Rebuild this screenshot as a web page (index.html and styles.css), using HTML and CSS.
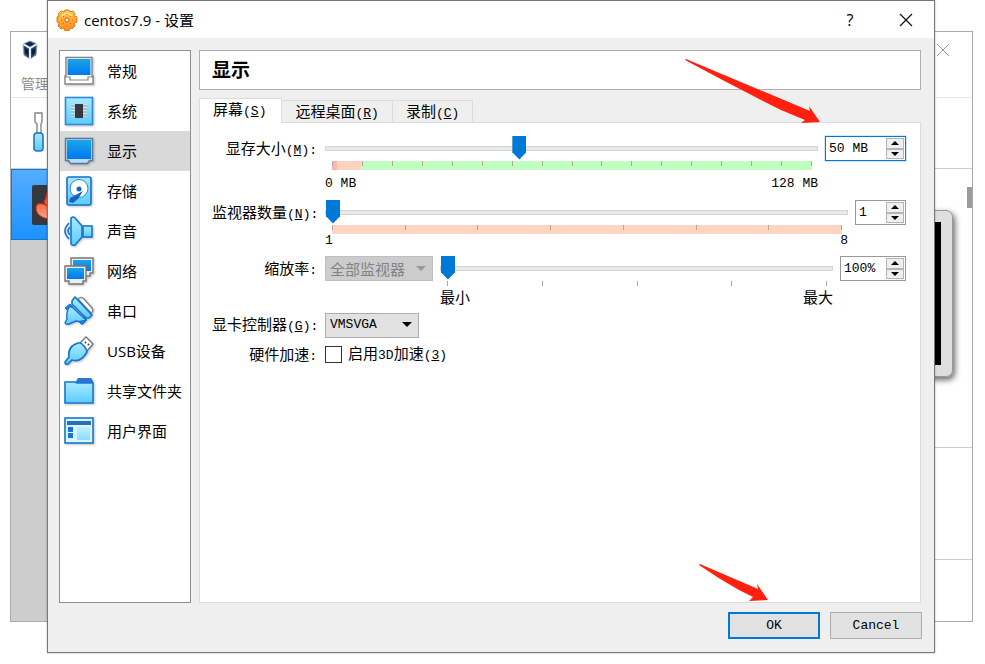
FILE: index.html
```
<!DOCTYPE html>
<html lang="zh-CN">
<head>
  <meta charset="utf-8">
  <title>centos7.9 - 设置</title>
  <link rel="stylesheet" href="styles.css">
</head>
<body>
  <!-- shared gradients -->
  <svg class="defs" width="0" height="0" aria-hidden="true">
    <defs>
      <linearGradient id="screen" x1="0" y1="0" x2="0" y2="1"><stop offset="0" stop-color="#1ba5e8"/><stop offset="1" stop-color="#0078f0"/></linearGradient>
      <linearGradient id="light" x1="0" y1="0" x2="0" y2="1"><stop offset="0" stop-color="#a8ebff"/><stop offset="1" stop-color="#5ccbff"/></linearGradient>
      <linearGradient id="orange" x1="0" y1="0" x2="0" y2="1"><stop offset="0" stop-color="#ffc64a"/><stop offset="1" stop-color="#ff8b1e"/></linearGradient>
      <linearGradient id="red" x1="0" y1="0" x2="0" y2="1"><stop offset="0" stop-color="#e8300c"/><stop offset="1" stop-color="#ffa88c"/></linearGradient>
    </defs>
  </svg>

  <!-- Manager window behind the dialog -->
  <div class="manager">
    <div class="manager-title">
      <svg width="18" height="20" viewBox="0 0 18 20">
        <path d="M9 1l7 3-1 11-6 4-6-4L2 4z" fill="#26466f" stroke="#8a9bb0"/>
        <path d="M2 4l7 4 7-4M9 8v11" fill="none" stroke="#e5edf6" stroke-width="2"/>
        <path d="M5 4l4-2 4 2-4 2z" fill="#102545"/>
        <path d="M4 8l3 2v5l-3-2zM14 8l-3 2v5l3-2z" fill="#0c1d3c"/>
      </svg>
      <button class="close-btn" aria-label="关闭管理器">
        <svg width="14" height="14" viewBox="0 0 14 14"><path d="M1 1l12 12M13 1L1 13" stroke="#999" fill="none"/></svg>
      </button>
    </div>
    <div class="manager-menu">管理</div>
    <div class="manager-toolbar">
      <svg width="12" height="40" viewBox="0 0 12 40">
        <path d="M2 1h7v9l-1 2v9H4v-9l-2-2z" fill="#fff" stroke="#858585" stroke-width="1.4"/>
        <rect x="1" y="21" width="9" height="18" rx="3" fill="url(#light)" stroke="#1c74cc" stroke-width="1.6"/>
      </svg>
    </div>
    <div class="manager-main">
      <div class="machines">
        <div class="machine">
          <svg width="40" height="40" viewBox="0 0 40 40">
            <rect width="40" height="40" rx="2" fill="#363840"/>
            <path d="M18 5c-5 2-3 8-6 11 0 3 2 3 3 5-4-3-11-4-11 2 0 8 9 12 20 11V5z" fill="url(#red)" stroke="#c72c10"/>
          </svg>
        </div>
      </div>
      <div class="details">
        <div class="preview"><div class="monitor"></div></div>
        <div class="detail-row"></div>
        <div class="detail-row last"></div>
        <div class="scroll-thumb"></div>
      </div>
    </div>
  </div>

  <!-- Settings dialog -->
  <div class="dialog" role="dialog" aria-labelledby="dialog-title">
    <header class="titlebar">
      <svg width="22" height="22" viewBox="0 0 22 22">
        <path d="M9 1h4l1 2 3-1 2 3-1 2 3 1v5l-3 1 1 3-3 3-2-1-1 3H9l-1-3-3 1-3-3 1-3-2-1V8l2-1-1-2 3-3 3 1z" fill="url(#orange)" stroke="#e07a18" stroke-linejoin="round"/>
        <path d="M6 7q5-5 10 0" fill="none" stroke="#ffe08b" stroke-width="2"/>
        <circle cx="11" cy="11" r="2" fill="#fff" stroke="#c75c08"/>
        <path d="M11 5v1M11 16v1M5 11h1M16 11h1M7 7l1 1M15 7l-1 1M7 15l1-1M15 15l-1-1" stroke="#d96c0a"/>
      </svg>
      <span id="dialog-title" class="title-text">centos7.9 - 设置</span>
      <button class="help-btn" aria-label="帮助">?</button>
      <button class="close-btn" aria-label="关闭">
        <svg width="14" height="14" viewBox="0 0 14 14"><path d="M1 1l12 12M13 1L1 13" stroke="#111" stroke-width="1.2" fill="none"/></svg>
      </button>
    </header>

    <div class="dialog-body">
      <nav class="categories">
        <button class="category">
          <svg class="icon" viewBox="0 0 30 30">
            <path d="M2 1.500h26v18.500h1v8H1v-8h1z" fill="#fff" stroke="#858585" stroke-width="1.4"/>
            <rect x="3.500" y="3" width="23" height="16" fill="url(#screen)"/>
            <path d="M1 21h5v3h18v-3h5" fill="none" stroke="#858585" stroke-width="1.2"/>
          </svg>常规
        </button>
        <button class="category">
          <svg class="icon" viewBox="0 0 30 30">
            <rect x="1.500" y="1.500" width="27" height="27" fill="url(#light)" stroke="#2f8ada" stroke-width="1.6"/>
            <path d="M7 10h16M7 13h16M7 16h16M7 19h16" stroke="#fff" stroke-width="2.6"/>
            <path d="M7 10h16M7 13h16M7 16h16M7 19h16" stroke="#637786"/>
            <rect x="11" y="8" width="8" height="14" fill="#343941"/>
          </svg>系统
        </button>
        <button class="category active">
          <svg class="icon" viewBox="0 0 30 30">
            <path d="M1.500 2.500h27v22h-3l-2 3h-17l-2-3h-3z" fill="#b9dcf8" stroke="#56799c" stroke-width="1.4"/>
            <rect x="3" y="4" width="24" height="19" fill="url(#screen)"/>
          </svg>显示
        </button>
        <button class="category">
          <svg class="icon" viewBox="0 0 30 30">
            <rect x="3" y="1" width="24" height="28" rx="2" fill="url(#light)" stroke="#1772cc" stroke-width="1.6"/>
            <circle cx="15" cy="12.500" r="9" fill="#fff" stroke="#238ad9"/>
            <circle cx="15" cy="13" r="2.500" fill="#1763bd"/>
            <path d="M19 15l-5 8-5 4-4-1 1-4z" fill="#1763bd"/>
          </svg>存储
        </button>
        <button class="category">
          <svg class="icon" viewBox="0 0 30 30">
            <path d="M7 2q2-2 4 0l7 8v11l-7 8q-2 1-4-1z" fill="url(#light)" stroke="#1776d0" stroke-width="1.6"/>
            <rect x="19" y="10" width="9" height="11" fill="url(#light)" stroke="#1776d0" stroke-width="1.6"/>
            <path d="M5 7q-8 8 0 16M6 11q-4 4 0 8" fill="none" stroke="#1776d0" stroke-width="1.6"/>
          </svg>声音
        </button>
        <button class="category">
          <svg class="icon" viewBox="0 0 30 30">
            <path d="M7 2h22v15h-3v3H7z" fill="#eee" stroke="#777" stroke-width="1.4"/>
            <rect x="9" y="4" width="18" height="11" fill="url(#screen)"/>
            <path d="M1 10h21v15h-3v3H5v-3H1z" fill="#eee" stroke="#777" stroke-width="1.4"/>
            <rect x="3" y="12" width="17" height="11" fill="url(#screen)"/>
          </svg>网络
        </button>
        <button class="category">
          <svg class="icon" viewBox="0 0 30 30">
            <path d="M14 3q3-3 6 0l8 9q2 3-1 5z" fill="#fff" stroke="#858585" stroke-width="1.4"/>
            <path d="M1 12l5-4 3 3-5 4zM15 26l5-5 3 3-4 4q-2 1-4-2z" fill="#1f86e0" stroke="#1773cc"/>
            <path d="M8 11l14 13q-5 2-10 1l-7 3q-3 1-4-1l2-4q-1-6 2-12z" fill="url(#light)" stroke="#1773cc" stroke-width="1.4" stroke-linejoin="round"/>
            <path d="M8 5l3-4 17 18-3 3h-3L8 8z" fill="url(#light)" stroke="#1773cc" stroke-width="1.6" stroke-linejoin="round"/>
          </svg>串口
        </button>
        <button class="category">
          <svg class="icon" viewBox="0 0 30 30">
            <path d="M16 7l6-6 7 7-6 7z" fill="#fff" stroke="#777" stroke-width="1.4"/>
            <path d="M21 6l1 1M24 8l1 1" stroke="#444" stroke-width="2"/>
            <path d="M14 7q3-1 6 3t3 6c-4 7-9 10-15 8l-4 4q-3 1-3-2l4-5C4 14 7 9 14 7z" fill="url(#light)" stroke="#1875c7" stroke-width="1.6"/>
          </svg>USB设备
        </button>
        <button class="category">
          <svg class="icon" viewBox="0 0 30 30">
            <path d="M11 7l3-5h13l2 3v5H11z" fill="#2b76d2"/>
            <path d="M1 6h10l2 1h16v20H1z" fill="url(#light)" stroke="#1678d0" stroke-width="1.6"/>
          </svg>共享文件夹
        </button>
        <button class="category">
          <svg class="icon" viewBox="0 0 30 30">
            <rect x="1" y="2" width="28" height="25" fill="#d9f5ff" stroke="#1678d0" stroke-width="1.6"/>
            <path d="M3 5h24v4H3z" fill="#286fc2"/>
            <path d="M4 11h5v5H4zM4 17h5v5H4z" fill="#1474dd"/>
            <rect x="13" y="11" width="13" height="13" fill="url(#light)" opacity=".6"/>
          </svg>用户界面
        </button>
      </nav>

      <main class="page">
        <h1 class="page-title">显示</h1>

        <div class="tabs" role="tablist">
          <button class="tab active" role="tab" aria-selected="true">屏幕<span class="mono">(<u>S</u>)</span></button>
          <button class="tab" role="tab">远程桌面<span class="mono">(<u>R</u>)</span></button>
          <button class="tab" role="tab">录制<span class="mono">(<u>C</u>)</span></button>
        </div>

        <form class="panel">
          <label class="label" for="memory">显存大小<span class="mono">(<u>M</u>):</span></label>
          <div class="controls memory-row">
            <div class="slider">
              <input id="memory" type="range" min="0" max="128" value="50">
              <div class="scale memory-scale"><i></i><i></i><i></i><i></i><i></i><i></i><i></i><i></i><i></i><i></i><i></i><i></i><i></i><i></i><i></i><i></i><i></i></div>
              <div class="ends mono"><span>0 MB</span><span>128 MB</span></div>
            </div>
            <div class="spin wide focused">
              <input class="mono" type="text" value="50 MB" aria-label="显存大小">
              <div class="spin-buttons"><button type="button" class="up" aria-label="增加"></button><button type="button" class="down" aria-label="减少"></button></div>
            </div>
          </div>

          <label class="label" for="monitors">监视器数量<span class="mono">(<u>N</u>):</span></label>
          <div class="controls monitors-row">
            <div class="slider">
              <input id="monitors" type="range" min="1" max="8" value="1">
              <div class="scale monitors-scale"><i></i><i></i><i></i><i></i><i></i><i></i><i></i><i></i></div>
              <div class="ends mono"><span>1</span><span>8</span></div>
            </div>
            <div class="spin narrow">
              <input class="mono" type="text" value="1" aria-label="监视器数量">
              <div class="spin-buttons"><button type="button" class="up" aria-label="增加"></button><button type="button" class="down" aria-label="减少"></button></div>
            </div>
          </div>

          <label class="label" for="zoom">缩放率<span class="mono">:</span></label>
          <div class="controls zoom-row">
            <div class="select disabled">
              <select aria-label="监视器" disabled><option>全部监视器</option></select>
            </div>
            <div class="slider">
              <input id="zoom" type="range" min="100" max="200" value="100">
              <div class="scale"><i></i><i></i><i></i><i></i><i></i></div>
              <div class="ends"><span>最小</span><span>最大</span></div>
            </div>
            <div class="spin medium">
              <input class="mono" type="text" value="100%" aria-label="缩放率">
              <div class="spin-buttons"><button type="button" class="up" aria-label="增加"></button><button type="button" class="down" aria-label="减少"></button></div>
            </div>
          </div>

          <label class="label" for="controller">显卡控制器<span class="mono">(<u>G</u>):</span></label>
          <div class="controls">
            <div class="select">
              <select id="controller" class="mono"><option>VMSVGA</option></select>
            </div>
          </div>

          <span class="label short">硬件加速<span class="mono">:</span></span>
          <label class="check">
            <input type="checkbox">
            <span>启用<span class="mono">3D</span>加速<span class="mono">(<u>3</u>)</span></span>
          </label>
        </form>
      </main>
    </div>

    <footer class="buttons">
      <button class="btn primary mono">OK</button>
      <button class="btn mono">Cancel</button>
    </footer>

    <!-- Red pointers -->
    <svg class="arrow arrow-memory" width="136" height="66" viewBox="0 0 136 66">
      <path d="M1 1L125 53 124 48 135 64 116 65 120 62 96 52Q48 28 0 2z" fill="#ff2010"/>
    </svg>
    <svg class="arrow arrow-ok" width="70" height="38" viewBox="0 0 70 38">
      <path d="M1 0L59 25 58 20 69 36 50 37 54 33 40 26Q20 15 0 1z" fill="#ff2010"/>
    </svg>
  </div>
</body>
</html>
```

FILE: styles.css
```
* {
  box-sizing: border-box;
}

body {
  margin: 0;
  height: 100vh;
  min-height: 560px;
  position: relative;
  overflow: hidden;
  background: #fff;
  color: #000;
  font-family: "Open Sans", "Noto Sans CJK SC", sans-serif;
  font-size: 15px;
  line-height: 20px;
}

button, input, select {
  font: inherit;
  color: inherit;
  margin: 0;
  padding: 0;
}

button {
  border: none;
  background: none;
}

.defs {
  position: absolute;
}

.mono {
  font-family: "Liberation Mono", monospace;
  font-size: 13px;
}

/* Manager window */
.manager {
  position: absolute;
  top: 31px;
  right: 12px;
  bottom: 42px;
  left: 10px;
  display: flex;
  flex-direction: column;
  border: 1px solid #aaa;
  background: #fff;
}

.manager-title {
  display: flex;
  justify-content: space-between;
  align-items: center;
  height: 36px;
  padding: 0 22px 0 10px;
}

.manager-menu {
  height: 30px;
  padding: 6px 10px;
  border-bottom: 1px solid #e8e8e8;
  color: #8c8c8c;
  font-size: 14px;
}

.manager-toolbar {
  height: 71px;
  padding: 14px 22px;
  border-bottom: 1px solid #ccc;
}

.manager-main {
  flex: 1;
  display: flex;
}

.machines {
  width: 35%;
  background: #cdcdcd;
}

.machine {
  height: 71px;
  padding: 15px 20px;
  border: 1px solid #1478d0;
  background: linear-gradient(#55adff, #1c93ff);
}

.details {
  flex: 1;
  position: relative;
}

.preview {
  height: 279px;
  padding: 41px 19px 0;
  border-bottom: 1px solid #ccc;
}

.monitor {
  height: 167px;
  border: 12px solid #dedede;
  outline: 1px solid #999;
  outline-offset: -1px;
  border-radius: 7px;
  background: #000;
  box-shadow: 2px 3px 6px rgba(0, 0, 0, 0.6);
}

.detail-row {
  height: 112px;
  border-bottom: 1px solid #ccc;
}

.detail-row.last {
  border: none;
  height: auto;
}

.scroll-thumb {
  position: absolute;
  top: 18px;
  right: 0;
  width: 5px;
  height: 21px;
  background: #9b9b9b;
}

/* Dialog window */
.dialog {
  position: absolute;
  top: 0;
  right: 50px;
  bottom: 11px;
  left: 47px;
  display: flex;
  flex-direction: column;
  border: 1px solid #777;
  background: #efefef;
  box-shadow: 0 0 2px rgba(0, 0, 0, 0.3);
}

.titlebar {
  display: flex;
  align-items: center;
  height: 37px;
  padding: 0 16px 0 8px;
  background: #fff;
}

.title-text {
  flex: 1;
  margin-left: 6px;
}

.help-btn {
  width: 28px;
  margin-right: 30px;
  font-size: 16px;
}

.close-btn {
  display: flex;
  justify-content: center;
  align-items: center;
  width: 24px;
  height: 24px;
}

.manager .close-btn {
  width: 14px;
}

.dialog-body {
  flex: 1;
  display: flex;
  gap: 8px;
  padding: 12px 13px 0 11px;
  min-height: 0;
}

/* Category list */
.categories {
  flex: none;
  width: 132px;
  border: 1px solid #8b9097;
  background: #fff;
}

.category {
  display: flex;
  align-items: center;
  gap: 13px;
  width: 100%;
  height: 40px;
  padding-left: 4px;
  text-align: left;
  white-space: nowrap;
}

.category.active {
  background: #d9d9d9;
}

.icon {
  flex: none;
  width: 30px;
  height: 30px;
  filter: drop-shadow(1px 1px 1px rgba(0, 0, 0, 0.25));
}

/* Settings page */
.page {
  flex: 1;
  display: flex;
  flex-direction: column;
  min-width: 0;
}

.page-title {
  height: 40px;
  margin: 0;
  padding-left: 12px;
  border: 1px solid #b0b0b0;
  background: #fff;
  font-size: 19px;
  line-height: 38px;
}

.tabs {
  display: flex;
  align-items: flex-end;
  height: 32px;
}

.tab {
  height: 22px;
  padding: 0 13px;
  border: 1px solid #dcdcdc;
  border-left: none;
  border-bottom: none;
  line-height: 20px;
}

.tab.active {
  height: 25px;
  margin-bottom: -1px;
  padding: 0 15px 2px 13px;
  border-left: 1px solid #dcdcdc;
  background: #fff;
  z-index: 1;
}

.panel {
  flex: 1;
  display: grid;
  grid-template-columns: 105px 1fr;
  align-content: start;
  column-gap: 8px;
  row-gap: 8px;
  padding: 13px 14px 0 12px;
  border: 1px solid #dcdcdc;
  background: #fff;
}

.label {
  height: 25px;
  line-height: 24px;
  text-align: right;
  white-space: nowrap;
}

.label.short {
  height: 18px;
  line-height: 18px;
}

.controls {
  display: flex;
  gap: 7px;
}

.memory-row {
  height: 56px;
}

.monitors-row,
.zoom-row {
  height: 48px;
}

/* Sliders */
.slider {
  flex: 1;
  min-width: 0;
}

.slider input {
  -webkit-appearance: none;
  appearance: none;
  display: block;
  width: 100%;
  height: 24px;
  background: none;
}

.slider input::-webkit-slider-runnable-track {
  height: 5px;
  border: 1px solid #d3d5d5;
  background: #e7eaea;
}

.slider input::-webkit-slider-thumb {
  -webkit-appearance: none;
  width: 14px;
  height: 24px;
  margin-top: -11px;
  background: #0078d7;
  clip-path: polygon(0 0, 100% 0, 100% 70%, 50% 100%, 0 70%);
}

.scale {
  display: flex;
  justify-content: space-between;
  height: 9px;
  margin: 1px 6px 0 7px;
}

.scale i {
  width: 1px;
  height: 5px;
  background: #a9a9a0;
}

.memory-scale {
  background: linear-gradient(to right, #ffb5b5 1%, #ffd2bf 1%, #ffd2bf 6%, #c1ffc1 6%);
}

.monitors-scale {
  background: #ffd5c1;
}

.ends {
  display: flex;
  justify-content: space-between;
  line-height: 14px;
}

.memory-row .ends {
  margin-top: 7px;
}

/* Spin boxes */
.spin {
  flex: none;
  display: flex;
  height: 25px;
  padding: 1px;
  border: 1px solid #999;
  background: #fff;
}

.spin.wide {
  width: 81px;
}

.spin.medium {
  width: 66px;
}

.spin.narrow {
  width: 51px;
}

.spin.focused {
  border-color: #0078d7;
  box-shadow: 0 0 1px #0078d7;
}

.spin input {
  flex: 1;
  min-width: 0;
  padding-left: 2px;
  border: none;
  outline: none;
  background: none;
}

.spin-buttons {
  display: flex;
  flex-direction: column;
  width: 18px;
}

.spin-buttons button {
  flex: 1;
  display: flex;
  justify-content: center;
  align-items: center;
  border: 1px solid #b4b4b4;
  background: #efefef;
}

.spin-buttons button::before {
  content: "";
  border: 4px solid transparent;
}

.spin-buttons .up::before {
  border-top-width: 0;
  border-bottom-color: #000;
}

.spin-buttons .down::before {
  border-bottom-width: 0;
  border-top-color: #000;
}

/* Drop-downs */
.select {
  position: relative;
  width: 94px;
  height: 25px;
}

.select select {
  -webkit-appearance: none;
  appearance: none;
  width: 100%;
  height: 100%;
  padding: 0 4px;
  border: 1px solid #adadad;
  border-radius: 0;
  background: #e1e1e1;
}

.select::after {
  content: "";
  position: absolute;
  top: 10px;
  right: 7px;
  border: 5px solid transparent;
  border-top-color: #000;
  border-bottom-width: 0;
}

.select.disabled {
  width: 108px;
}

.select.disabled select {
  background: #ccc;
  border-color: #bfbfbf;
  color: #838383;
  opacity: 1;
}

.select.disabled::after {
  border-top-color: #999;
}

.check {
  display: flex;
  align-items: center;
  gap: 6px;
  height: 18px;
}

.check input {
  -webkit-appearance: none;
  appearance: none;
  width: 17px;
  height: 17px;
  border: 1px solid #333;
  background: #fff;
}

/* Bottom buttons */
.buttons {
  display: flex;
  justify-content: flex-end;
  gap: 10px;
  padding: 9px 12px 13px;
}

.btn {
  width: 92px;
  height: 27px;
  border: 1px solid #adadad;
  background: #e1e1e1;
}

.btn.primary {
  border: 2px solid #0078d7;
}

.arrow {
  position: absolute;
  pointer-events: none;
}

.arrow-memory {
  top: 57px;
  right: 113px;
}

.arrow-ok {
  right: 165px;
  bottom: 50px;
}
```
